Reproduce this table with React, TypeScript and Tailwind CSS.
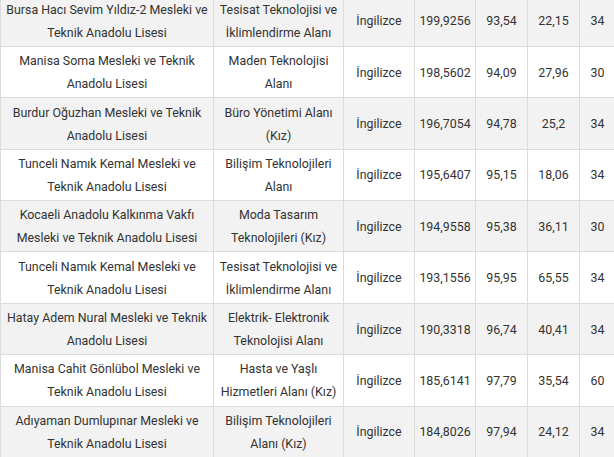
const rows = [
  { okul: ["Bursa Hacı Sevim Yıldız-2 Mesleki ve", "Teknik Anadolu Lisesi"], alan: ["Tesisat Teknolojisi ve", "İklimlendirme Alanı"], puan: "199,9256", yuzde: "93,54", a: "22,15", k: "34" },
  { okul: ["Manisa Soma Mesleki ve Teknik", "Anadolu Lisesi"], alan: ["Maden Teknolojisi", "Alanı"], puan: "198,5602", yuzde: "94,09", a: "27,96", k: "30" },
  { okul: ["Burdur Oğuzhan Mesleki ve Teknik", "Anadolu Lisesi"], alan: ["Büro Yönetimi Alanı", "(Kız)"], puan: "196,7054", yuzde: "94,78", a: "25,2", k: "34" },
  { okul: ["Tunceli Namık Kemal Mesleki ve", "Teknik Anadolu Lisesi"], alan: ["Bilişim Teknolojileri", "Alanı"], puan: "195,6407", yuzde: "95,15", a: "18,06", k: "34" },
  { okul: ["Kocaeli Anadolu Kalkınma Vakfı", "Mesleki ve Teknik Anadolu Lisesi"], alan: ["Moda Tasarım", "Teknolojileri (Kız)"], puan: "194,9558", yuzde: "95,38", a: "36,11", k: "30" },
  { okul: ["Tunceli Namık Kemal Mesleki ve", "Teknik Anadolu Lisesi"], alan: ["Tesisat Teknolojisi ve", "İklimlendirme Alanı"], puan: "193,1556", yuzde: "95,95", a: "65,55", k: "34" },
  { okul: ["Hatay Adem Nural Mesleki ve Teknik", "Anadolu Lisesi"], alan: ["Elektrik- Elektronik", "Teknolojisi Alanı"], puan: "190,3318", yuzde: "96,74", a: "40,41", k: "34" },
  { okul: ["Manisa Cahit Gönlübol Mesleki ve", "Teknik Anadolu Lisesi"], alan: ["Hasta ve Yaşlı", "Hizmetleri Alanı (Kız)"], puan: "185,6141", yuzde: "97,79", a: "35,54", k: "60" },
  { okul: ["Adıyaman Dumlupınar Mesleki ve", "Teknik Anadolu Lisesi"], alan: ["Bilişim Teknolojileri", "Alanı (Kız)"], puan: "184,8026", yuzde: "97,94", a: "24,12", k: "34" },
];

const cell =
  "flex flex-col items-center justify-center border-r border-b border-[#dcdcdc] py-[2.2px] text-center whitespace-nowrap";

export default function App() {
  return (
    <div className="h-[457px] w-[614px] overflow-hidden bg-white">
      <div
        className="-mt-[5.4px] w-[616px] border-l border-t border-[#dcdcdc] text-[12.4px] leading-[23px] text-[#333]"
        style={{ fontFamily: "Roboto, 'Noto Sans', sans-serif" }}
      >
        {rows.map((r, i) => (
          <div
            key={i}
            className={`grid grid-cols-[213px_130px_71px_61px_52px_52px_36px] ${
              i % 2 === 0 ? "bg-[#f2f2f2]" : "bg-white"
            }`}
          >
            <div className={cell}>
              {r.okul.map((l) => (
                <span key={l}>{l}</span>
              ))}
            </div>
            <div className={cell}>
              {r.alan.map((l) => (
                <span key={l}>{l}</span>
              ))}
            </div>
            <div className={cell}>İngilizce</div>
            <div className={cell}>{r.puan}</div>
            <div className={cell}>{r.yuzde}</div>
            <div className={cell}>{r.a}</div>
            <div className={cell}>{r.k}</div>
          </div>
        ))}
      </div>
    </div>
  );
}
